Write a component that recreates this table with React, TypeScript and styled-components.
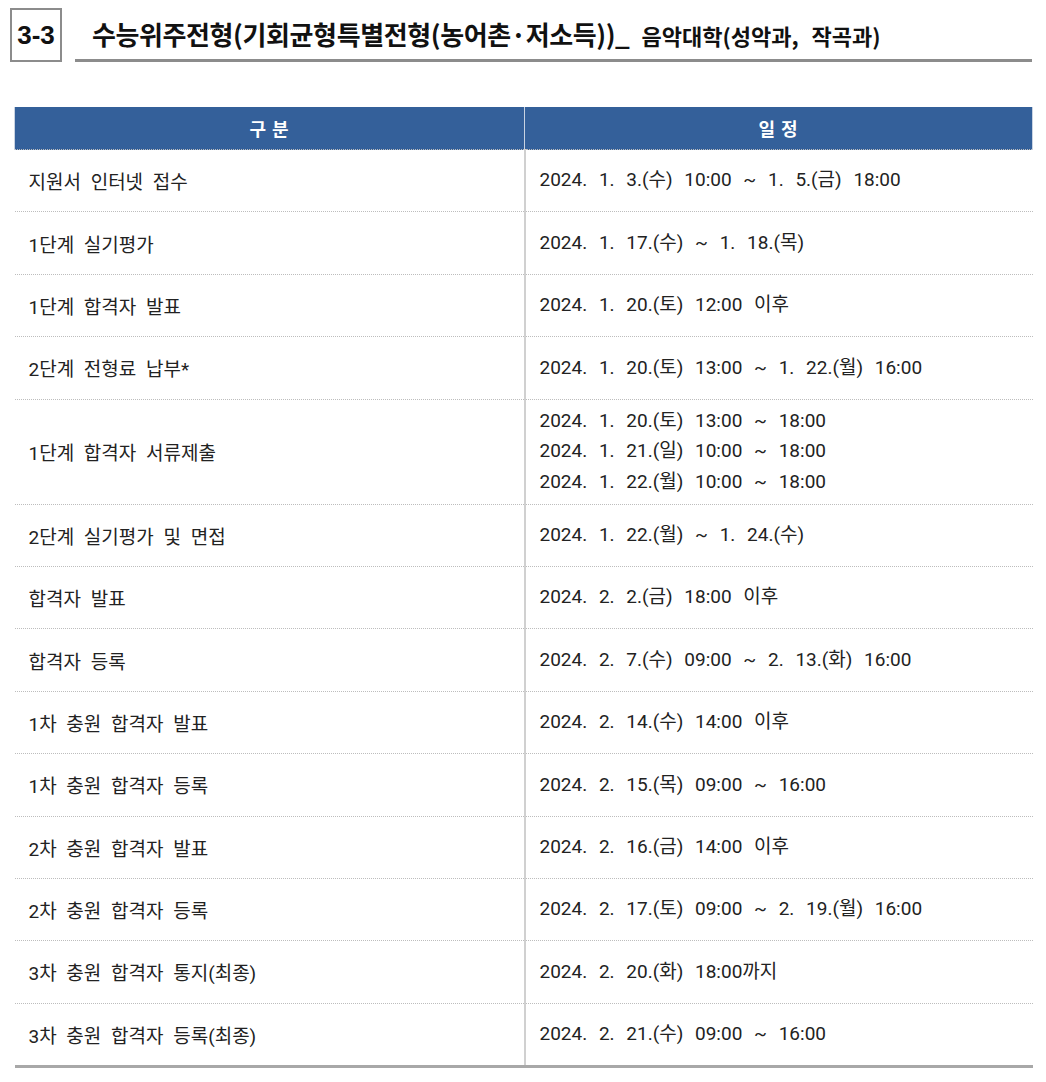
import React from 'react';
import styled, { createGlobalStyle } from 'styled-components';

type Row = { label: string; dates: string[] };

const rows: Row[] = [
  { label: '지원서 인터넷 접수', dates: ['2024. 1. 3.(수) 10:00 ~ 1. 5.(금) 18:00'] },
  { label: '1단계 실기평가', dates: ['2024. 1. 17.(수) ~ 1. 18.(목)'] },
  { label: '1단계 합격자 발표', dates: ['2024. 1. 20.(토) 12:00 이후'] },
  { label: '2단계 전형료 납부*', dates: ['2024. 1. 20.(토) 13:00 ~ 1. 22.(월) 16:00'] },
  {
    label: '1단계 합격자 서류제출',
    dates: [
      '2024. 1. 20.(토) 13:00 ~ 18:00',
      '2024. 1. 21.(일) 10:00 ~ 18:00',
      '2024. 1. 22.(월) 10:00 ~ 18:00',
    ],
  },
  { label: '2단계 실기평가 및 면접', dates: ['2024. 1. 22.(월) ~ 1. 24.(수)'] },
  { label: '합격자 발표', dates: ['2024. 2. 2.(금) 18:00 이후'] },
  { label: '합격자 등록', dates: ['2024. 2. 7.(수) 09:00 ~ 2. 13.(화) 16:00'] },
  { label: '1차 충원 합격자 발표', dates: ['2024. 2. 14.(수) 14:00 이후'] },
  { label: '1차 충원 합격자 등록', dates: ['2024. 2. 15.(목) 09:00 ~ 16:00'] },
  { label: '2차 충원 합격자 발표', dates: ['2024. 2. 16.(금) 14:00 이후'] },
  { label: '2차 충원 합격자 등록', dates: ['2024. 2. 17.(토) 09:00 ~ 2. 19.(월) 16:00'] },
  { label: '3차 충원 합격자 통지(최종)', dates: ['2024. 2. 20.(화) 18:00까지'] },
  { label: '3차 충원 합격자 등록(최종)', dates: ['2024. 2. 21.(수) 09:00 ~ 16:00'] },
];

const App = () => {
  return (
    <Page>
      <GlobalStyle />
      <Heading>
        <NumBox>3-3</NumBox>
        <TitleLine>
          <Title>수능위주전형(기회균형특별전형(농어촌·저소득))_</Title>
          <SubTitle>음악대학(성악과, 작곡과)</SubTitle>
        </TitleLine>
      </Heading>
      <Table>
        <thead>
          <tr>
            <HeadCell>구 분</HeadCell>
            <HeadCell>일 정</HeadCell>
          </tr>
        </thead>
        <tbody>
          {rows.map((row, i) => (
            <BodyRow key={`row${i}`} last={i === rows.length - 1}>
              <LabelCell tall={row.dates.length > 1}>{row.label}</LabelCell>
              <DateCell>
                {row.dates.map((d, j) => (
                  <DateLine key={`d${j}`}>{d}</DateLine>
                ))}
              </DateCell>
            </BodyRow>
          ))}
        </tbody>
      </Table>
    </Page>
  );
};

const GlobalStyle = createGlobalStyle`
  html, body {
    margin: 0;
    padding: 0;
    background: #ffffff;
  }
  body {
    font-family: Roboto, "Noto Sans CJK KR", sans-serif;
    color: #111111;
  }
`;

const Page = styled.div`
  width: 1046px;
  padding: 8px 0 0 10px;
  box-sizing: border-box;
`;

const Heading = styled.div`
  display: flex;
  align-items: stretch;
  height: 54px;
`;

const NumBox = styled.div`
  width: 48px;
  border: 2px solid #8c8c8c;
  display: flex;
  align-items: center;
  justify-content: center;
  font-family: "Liberation Sans", Arial, sans-serif;
  font-weight: bold;
  font-size: 26px;
  color: #111;
`;

const TitleLine = styled.div`
  flex: 0 0 957px;
  margin-left: 13px;
  border-bottom: 3px solid #8c8c8c;
  display: flex;
  align-items: center;
  padding-left: 17px;
  box-sizing: border-box;
  gap: 12px;
  font-family: "Noto Sans CJK KR", sans-serif;
`;

const Title = styled.span`
  font-weight: bold;
  font-size: 26px;
  letter-spacing: -0.4px;
  color: #111;
`;

const SubTitle = styled.span`
  font-weight: bold;
  font-size: 22px;
  letter-spacing: 0;
  word-spacing: 8px;
  color: #111;
  padding-top: 3px;
`;

const Table = styled.table`
  margin: 45px 0 0 4px;
  width: 1019px;
  border-collapse: collapse;
  table-layout: fixed;
`;

const HeadCell = styled.th`
  height: 42px;
  background: #34609a;
  color: #ffffff;
  font-family: "Noto Sans CJK KR", sans-serif;
  font-size: 18px;
  font-weight: bold;
  letter-spacing: 1px;
  text-align: center;
  padding: 0;
  border-left: 1px solid #c9d3e2;
  &:last-child {
    border-right: 1px solid #c9d3e2;
  }
  &:first-child {
    width: 509px;
  }
`;

const BodyRow = styled.tr<{ last?: boolean }>`
  border-top: 1px dotted #bdbdbd;
  border-bottom: ${(p) => (p.last ? '3px solid #a8a8a8' : 'none')};
`;

const LabelCell = styled.td<{ tall?: boolean }>`
  height: ${(p) => (p.tall ? '104px' : '61.4px')};
  padding: 0 0 0 14px;
  font-size: 19px;
  word-spacing: 5px;
  color: #222;
  vertical-align: middle;
  border-right: 2px solid #d0d0d0;
`;

const DateCell = styled.td`
  padding: 0 0 0 14px;
  font-size: 19px;
  word-spacing: 7px;
  color: #222;
  vertical-align: middle;
`;

const DateLine = styled.div`
  line-height: 30.5px;
`;

export default App;
